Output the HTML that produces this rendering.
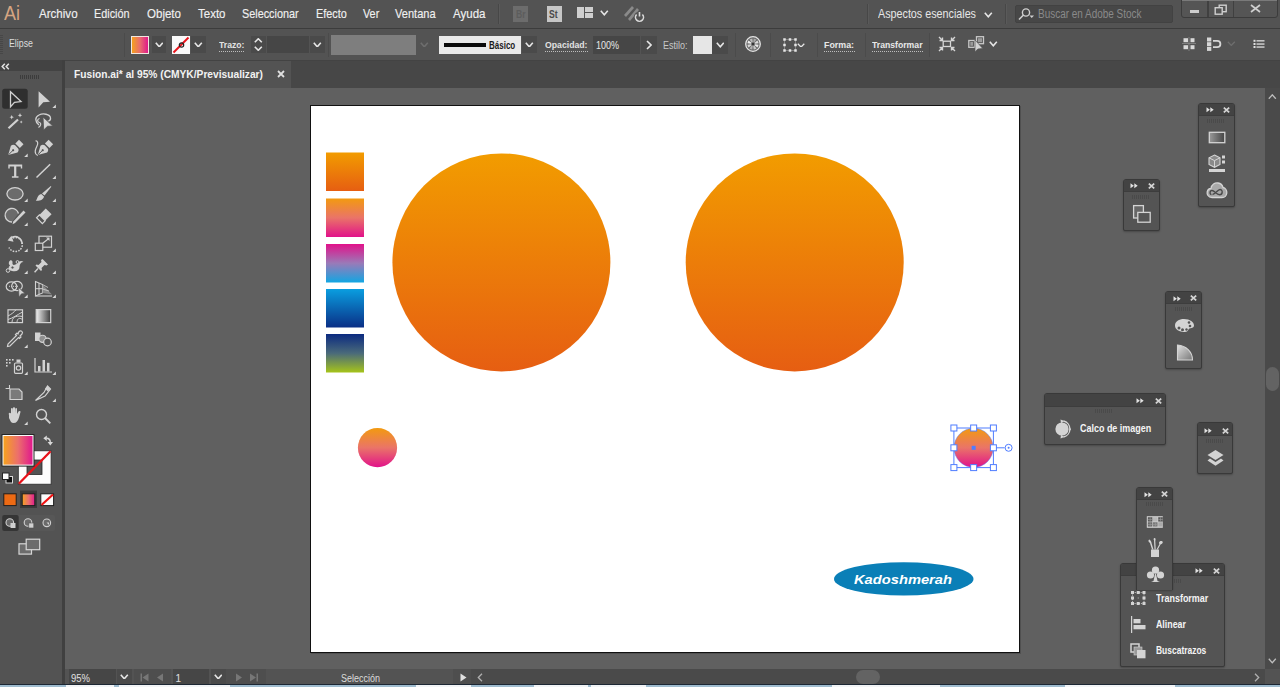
<!DOCTYPE html><html><head><meta charset="utf-8"><style>html,body{margin:0;padding:0;}body{width:1280px;height:687px;overflow:hidden;position:relative;background:#606060;font-family:"Liberation Sans", sans-serif;}.t{position:absolute;white-space:pre;line-height:1;transform-origin:0 0;}</style></head><body>
<div style="position:absolute;left:0px;top:0px;width:1280px;height:28px;background:#535353;"></div>
<div style="position:absolute;left:0px;top:28px;width:1280px;height:1px;background:#3c3c3c;"></div>
<div style="position:absolute;left:0px;top:29px;width:1280px;height:31px;background:#535353;"></div>
<div style="position:absolute;left:0px;top:60px;width:1280px;height:28px;background:#474747;"></div>
<div style="position:absolute;left:0px;top:60px;width:62px;height:627px;background:#535353;"></div>
<div style="position:absolute;left:0px;top:60px;width:62px;height:11px;background:#434343;"></div>
<div style="position:absolute;left:62px;top:60px;width:3px;height:627px;background:#404040;"></div>
<div style="position:absolute;left:65px;top:60px;width:1215px;height:1px;background:#434343;"></div>
<div style="position:absolute;left:65px;top:61px;width:226px;height:27px;background:#535353;"></div>
<div style="position:absolute;left:65px;top:88px;width:1200px;height:581px;background:#606060;"></div>
<div style="position:absolute;left:1265px;top:88px;width:15px;height:581px;background:#4a4a4a;"></div>
<div style="position:absolute;left:65px;top:669px;width:1215px;height:15px;background:#535353;"></div>
<div style="position:absolute;left:471px;top:669px;width:794px;height:15px;background:#4a4a4a;"></div>
<div style="position:absolute;left:0px;top:684px;width:1280px;height:1px;background:#1d2733;"></div>
<div style="position:absolute;left:0px;top:685px;width:1280px;height:2px;background:#9fbccf;"></div>
<div style="position:absolute;left:66px;top:685px;width:48px;height:2px;background:#f2f4f6;"></div>
<div style="position:absolute;left:119px;top:685px;width:111px;height:2px;background:#f2f4f6;"></div>
<div style="position:absolute;left:416px;top:685px;width:55px;height:2px;background:#f2f4f6;"></div>
<div style="position:absolute;left:534px;top:685px;width:54px;height:2px;background:#f2f4f6;"></div>
<div style="position:absolute;left:591px;top:685px;width:55px;height:2px;background:#f2f4f6;"></div>
<div style="position:absolute;left:832px;top:685px;width:108px;height:2px;background:#f2f4f6;"></div>
<div style="position:absolute;left:1065px;top:685px;width:110px;height:2px;background:#f2f4f6;"></div>
<div style="position:absolute;left:310px;top:105px;width:710px;height:548px;background:#ffffff;box-sizing:border-box;border:1px solid #111;box-shadow:1px 1px 0 #505050;"></div>
<svg style="position:absolute;left:0px;top:35px;" width="4" height="19" viewBox="0 0 4 19"><rect x="0" y="0" width="3" height="1" fill="#474747"/><rect x="0" y="2" width="3" height="1" fill="#474747"/><rect x="0" y="4" width="3" height="1" fill="#474747"/><rect x="0" y="6" width="3" height="1" fill="#474747"/><rect x="0" y="8" width="3" height="1" fill="#474747"/><rect x="0" y="10" width="3" height="1" fill="#474747"/><rect x="0" y="12" width="3" height="1" fill="#474747"/><rect x="0" y="14" width="3" height="1" fill="#474747"/><rect x="0" y="16" width="3" height="1" fill="#474747"/><rect x="0" y="18" width="3" height="1" fill="#474747"/></svg>
<div style="position:absolute;left:131px;top:36px;width:18px;height:18px;box-sizing:border-box;border:1px solid #f2e6e0;background:linear-gradient(90deg,#f5a11c,#ea6c6e 50%,#e0198a);"></div>
<div style="position:absolute;left:152px;top:36px;width:14px;height:17px;background:#4a4a4a;"></div>
<svg style="position:absolute;left:154.7px;top:41.7px;" width="8.6" height="5.6" viewBox="0 0 8.6 5.6"><path d="M0.8 0.8 L4.3 4.8 L7.8 0.8" fill="none" stroke="#e6e6e6" stroke-width="1.6"/></svg>
<svg style="position:absolute;left:172px;top:36px;" width="18" height="18" viewBox="0 0 18 18"><rect width="18" height="18" fill="#fafafa"/><line x1="1.5" y1="16.5" x2="16.5" y2="1.5" stroke="#e8141c" stroke-width="2"/><circle cx="9.5" cy="9" r="2.2" fill="none" stroke="#222" stroke-width="1.2"/></svg>
<div style="position:absolute;left:191px;top:36px;width:15px;height:17px;background:#4a4a4a;"></div>
<svg style="position:absolute;left:194.2px;top:41.7px;" width="8.6" height="5.6" viewBox="0 0 8.6 5.6"><path d="M0.8 0.8 L4.3 4.8 L7.8 0.8" fill="none" stroke="#e6e6e6" stroke-width="1.6"/></svg>
<div style="position:absolute;left:219px;top:50.5px;width:26px;height:1px;background:repeating-linear-gradient(90deg,#bdbdbd 0 1px,transparent 1px 2px);"></div>
<div style="position:absolute;left:251px;top:36px;width:15px;height:17px;background:#4a4a4a;"></div>
<svg style="position:absolute;left:254.2px;top:37.95px;" width="8.6" height="5.1" viewBox="0 0 8.6 5.1"><path d="M0.8 4.3 L4.3 0.8 L7.8 4.3" fill="none" stroke="#e6e6e6" stroke-width="1.6"/></svg>
<svg style="position:absolute;left:254.2px;top:45.95px;" width="8.6" height="5.1" viewBox="0 0 8.6 5.1"><path d="M0.8 0.8 L4.3 4.3 L7.8 0.8" fill="none" stroke="#e6e6e6" stroke-width="1.6"/></svg>
<div style="position:absolute;left:267px;top:36px;width:42px;height:17px;background:#464646;"></div>
<div style="position:absolute;left:310px;top:36px;width:15px;height:17px;background:#4a4a4a;"></div>
<svg style="position:absolute;left:313.2px;top:41.7px;" width="8.6" height="5.6" viewBox="0 0 8.6 5.6"><path d="M0.8 0.8 L4.3 4.8 L7.8 0.8" fill="none" stroke="#e6e6e6" stroke-width="1.6"/></svg>
<div style="position:absolute;left:331px;top:35px;width:85px;height:20px;background:#7e7e7e;"></div>
<svg style="position:absolute;left:420.2px;top:41.7px;" width="8.6" height="5.6" viewBox="0 0 8.6 5.6"><path d="M0.8 0.8 L4.3 4.8 L7.8 0.8" fill="none" stroke="#6e6e6e" stroke-width="1.6"/></svg>
<div style="position:absolute;left:439px;top:36px;width:82px;height:18px;background:#e9e9e9;"></div>
<div style="position:absolute;left:444px;top:43px;width:42px;height:3.5px;background:#0a0a0a;"></div>
<div style="position:absolute;left:522px;top:36px;width:15px;height:17px;background:#4a4a4a;"></div>
<svg style="position:absolute;left:525.2px;top:41.7px;" width="8.6" height="5.6" viewBox="0 0 8.6 5.6"><path d="M0.8 0.8 L4.3 4.8 L7.8 0.8" fill="none" stroke="#e6e6e6" stroke-width="1.6"/></svg>
<div style="position:absolute;left:545px;top:50.5px;width:43px;height:1px;background:repeating-linear-gradient(90deg,#bdbdbd 0 1px,transparent 1px 2px);"></div>
<div style="position:absolute;left:593px;top:36px;width:47px;height:18px;background:#464646;"></div>
<div style="position:absolute;left:641px;top:36px;width:16px;height:18px;background:#4a4a4a;"></div>
<svg style="position:absolute;left:646px;top:40px;" width="6" height="10" viewBox="0 0 6 10"><path d="M1 1 L5 5 L1 9" fill="none" stroke="#e6e6e6" stroke-width="1.6"/></svg>
<div style="position:absolute;left:693px;top:36px;width:19px;height:18px;background:#e6e6e6;"></div>
<div style="position:absolute;left:712px;top:36px;width:16px;height:18px;background:#4a4a4a;"></div>
<svg style="position:absolute;left:715.7px;top:42.2px;" width="8.6" height="5.6" viewBox="0 0 8.6 5.6"><path d="M0.8 0.8 L4.3 4.8 L7.8 0.8" fill="none" stroke="#e6e6e6" stroke-width="1.6"/></svg>
<div style="position:absolute;left:124px;top:33px;width:1px;height:24px;background:#4b4b4b;"></div>
<div style="position:absolute;left:328px;top:33px;width:1px;height:24px;background:#4b4b4b;"></div>
<div style="position:absolute;left:735px;top:33px;width:1px;height:24px;background:#4b4b4b;"></div>
<div style="position:absolute;left:770px;top:33px;width:1px;height:24px;background:#4b4b4b;"></div>
<div style="position:absolute;left:817px;top:33px;width:1px;height:24px;background:#4b4b4b;"></div>
<div style="position:absolute;left:865px;top:33px;width:1px;height:24px;background:#4b4b4b;"></div>
<div style="position:absolute;left:929px;top:33px;width:1px;height:24px;background:#4b4b4b;"></div>
<div style="position:absolute;left:824px;top:50.5px;width:31px;height:1px;background:repeating-linear-gradient(90deg,#bdbdbd 0 1px,transparent 1px 2px);"></div>
<div style="position:absolute;left:872px;top:50.5px;width:51px;height:1px;background:repeating-linear-gradient(90deg,#bdbdbd 0 1px,transparent 1px 2px);"></div>
<div style="position:absolute;left:498px;top:4px;width:1px;height:20px;background:#474747;"></div>
<div style="position:absolute;left:499px;top:4px;width:1px;height:20px;background:#5a5a5a;"></div>
<div style="position:absolute;left:513px;top:6px;width:15px;height:16px;background:#6c6c6c;"></div>
<div style="position:absolute;left:547px;top:6px;width:15px;height:16px;background:#c6c6c6;"></div>
<div style="position:absolute;left:577px;top:7px;width:7px;height:11px;background:#cfcfcf;"></div>
<div style="position:absolute;left:585px;top:7px;width:8px;height:5px;background:#cfcfcf;"></div>
<div style="position:absolute;left:585px;top:13px;width:8px;height:5px;background:#cfcfcf;"></div>
<svg style="position:absolute;left:600.2px;top:10.0px;" width="8.6" height="5.6" viewBox="0 0 8.6 5.6"><path d="M0.8 0.8 L4.3 4.8 L7.8 0.8" fill="none" stroke="#e6e6e6" stroke-width="1.6"/></svg>
<svg style="position:absolute;left:622px;top:4px;" width="24" height="20" viewBox="0 0 24 20"><path d="M2 11 L10 2 L12 4 L4 13 Z" fill="#8a8a8a"/><path d="M6 15 L15 4 L17 6 L8 17 Z" fill="#8a8a8a"/><circle cx="17.5" cy="13" r="5.6" fill="#535353"/><path d="M14.6 10.5 A4 4 0 1 0 20.4 10.5" fill="none" stroke="#d8d8d8" stroke-width="1.6"/><line x1="17.5" y1="8" x2="17.5" y2="12.5" stroke="#d8d8d8" stroke-width="1.6"/></svg>
<div style="position:absolute;left:867px;top:4px;width:1px;height:20px;background:#474747;"></div>
<div style="position:absolute;left:868px;top:4px;width:1px;height:20px;background:#5a5a5a;"></div>
<svg style="position:absolute;left:984.2px;top:12.0px;" width="8.6" height="5.6" viewBox="0 0 8.6 5.6"><path d="M0.8 0.8 L4.3 4.8 L7.8 0.8" fill="none" stroke="#e6e6e6" stroke-width="1.6"/></svg>
<div style="position:absolute;left:1005px;top:4px;width:1px;height:20px;background:#474747;"></div>
<div style="position:absolute;left:1006px;top:4px;width:1px;height:20px;background:#5a5a5a;"></div>
<div style="position:absolute;left:1015px;top:5px;width:158px;height:18px;box-sizing:border-box;background:#474747;border:1px solid #424242;border-radius:2px;"></div>
<svg style="position:absolute;left:1017px;top:7px;" width="18" height="14" viewBox="0 0 18 14"><circle cx="9" cy="5.5" r="3.6" fill="none" stroke="#d0d0d0" stroke-width="1.4"/><line x1="6.5" y1="8" x2="2" y2="12.5" stroke="#d0d0d0" stroke-width="1.6"/><path d="M12.5 8.5 L17 8.5 L14.75 11 Z" fill="#d0d0d0"/></svg>
<div style="position:absolute;left:1181px;top:-2px;width:97px;height:20px;box-sizing:border-box;background:#555;border:1px solid #3c3c3c;border-radius:0 0 3px 3px;"></div>
<div style="position:absolute;left:1182px;top:0px;width:95px;height:1px;background:#7a7a7a;"></div>
<div style="position:absolute;left:1207px;top:1px;width:2px;height:16px;background:#404040;"></div>
<div style="position:absolute;left:1233px;top:1px;width:1px;height:16px;background:#404040;"></div>
<div style="position:absolute;left:1190px;top:10px;width:9px;height:3px;background:#cdcdcd;"></div>
<svg style="position:absolute;left:1214px;top:4px;" width="14" height="11" viewBox="0 0 14 11"><rect x="5.2" y="1.2" width="7" height="6.5" fill="none" stroke="#cfcfcf" stroke-width="1.4"/><rect x="1.2" y="3.7" width="7" height="6.5" fill="#555" stroke="#cfcfcf" stroke-width="1.4"/></svg>
<svg style="position:absolute;left:1250px;top:4px;" width="11" height="9" viewBox="0 0 11 9"><path d="M1 1 L10 8 M10 1 L1 8" stroke="#cfcfcf" stroke-width="1.7"/></svg>
<svg style="position:absolute;left:745px;top:36px;" width="16" height="16" viewBox="0 0 16 16"><circle cx="8" cy="8" r="7.3" fill="#6a6a6a" stroke="#e4e4e4" stroke-width="1.3"/><path d="M9.99 8.24 L13.56 8.67 A5.6 5.6 0 0 1 12.41 11.46 L9.57 9.23 Z" fill="#e8e8e8"/><path d="M9.23 9.57 L11.46 12.41 A5.6 5.6 0 0 1 8.67 13.56 L8.24 9.99 Z" fill="#c8c8c8"/><path d="M7.76 9.99 L7.33 13.56 A5.6 5.6 0 0 1 4.54 12.41 L6.77 9.57 Z" fill="#b0b0b0"/><path d="M6.43 9.23 L3.59 11.46 A5.6 5.6 0 0 1 2.44 8.67 L6.01 8.24 Z" fill="#d8d8d8"/><path d="M6.01 7.76 L2.44 7.33 A5.6 5.6 0 0 1 3.59 4.54 L6.43 6.77 Z" fill="#f0f0f0"/><path d="M6.77 6.43 L4.54 3.59 A5.6 5.6 0 0 1 7.33 2.44 L7.76 6.01 Z" fill="#bcbcbc"/><path d="M8.24 6.01 L8.67 2.44 A5.6 5.6 0 0 1 11.46 3.59 L9.23 6.43 Z" fill="#a8a8a8"/><path d="M9.57 6.77 L12.41 4.54 A5.6 5.6 0 0 1 13.56 7.33 L9.99 7.76 Z" fill="#dcdcdc"/><circle cx="8" cy="8" r="1.1" fill="#2a2a2a"/></svg>
<svg style="position:absolute;left:783px;top:38px;" width="14" height="14" viewBox="0 0 14 14"><rect x="1.5" y="1.5" width="11" height="11" fill="none" stroke="#bdbdbd" stroke-width="0.9" stroke-dasharray="1 1"/><rect x="0.25" y="0.25" width="2.5" height="2.5" fill="#e6e6e6"/><rect x="0.25" y="5.75" width="2.5" height="2.5" fill="#e6e6e6"/><rect x="0.25" y="11.25" width="2.5" height="2.5" fill="#e6e6e6"/><rect x="5.75" y="0.25" width="2.5" height="2.5" fill="#e6e6e6"/><rect x="5.75" y="11.25" width="2.5" height="2.5" fill="#e6e6e6"/><rect x="11.25" y="0.25" width="2.5" height="2.5" fill="#e6e6e6"/><rect x="11.25" y="5.75" width="2.5" height="2.5" fill="#e6e6e6"/><rect x="11.25" y="11.25" width="2.5" height="2.5" fill="#e6e6e6"/></svg>
<svg style="position:absolute;left:797.45px;top:42.6px;" width="8.1" height="4.800000000000001" viewBox="0 0 8.1 4.800000000000001"><path d="M0.8 0.8 L4.05 4.0 L7.3 0.8" fill="none" stroke="#e6e6e6" stroke-width="1.3"/></svg>
<svg style="position:absolute;left:938px;top:36px;" width="18" height="16" viewBox="0 0 18 16"><rect x="5.2" y="5.2" width="7.3" height="5.3" fill="none" stroke="#d6d6d6" stroke-width="1.3"/><path d="M1 1 L4.5 4.5 M4.5 1.5 L4.5 4.5 L1.5 4.5" stroke="#d6d6d6" stroke-width="1.4" fill="none"/><path d="M17 1 L13.5 4.5 M13.5 1.5 L13.5 4.5 L16.5 4.5" stroke="#d6d6d6" stroke-width="1.4" fill="none"/><path d="M1 15 L4.5 11.5 M4.5 14.5 L4.5 11.5 L1.5 11.5" stroke="#d6d6d6" stroke-width="1.4" fill="none"/><path d="M17 15 L13.5 11.5 M13.5 14.5 L13.5 11.5 L16.5 11.5" stroke="#d6d6d6" stroke-width="1.4" fill="none"/></svg>
<svg style="position:absolute;left:967px;top:35px;" width="18" height="18" viewBox="0 0 18 18"><rect x="1.8" y="5.5" width="5.8" height="6.8" fill="none" stroke="#c8c8c8" stroke-width="1.3"/><rect x="3.3" y="7" width="2.8" height="3.8" fill="#9a9a9a"/><rect x="9.5" y="1.7" width="7" height="7" fill="none" stroke="#c8c8c8" stroke-width="1.3"/><rect x="11" y="3.2" width="4" height="4" fill="#9a9a9a"/><path d="M8 5 L8 17 L10.8 14 L15.8 13.5 Z" fill="#d2d2d2" stroke="#535353" stroke-width="0.7"/></svg>
<svg style="position:absolute;left:989.2px;top:41.2px;" width="8.6" height="5.6" viewBox="0 0 8.6 5.6"><path d="M0.8 0.8 L4.3 4.8 L7.8 0.8" fill="none" stroke="#e6e6e6" stroke-width="1.6"/></svg>
<svg style="position:absolute;left:1182px;top:37px;" width="14" height="14" viewBox="0 0 14 14"><line x1="7" y1="0" x2="7" y2="14" stroke="#8a8a8a" stroke-width="0.8"/><line x1="0" y1="6.5" x2="14" y2="6.5" stroke="#8a8a8a" stroke-width="0.8"/><rect x="1.5" y="1.2" width="4.5" height="4" fill="#d9d9d9"/><rect x="8.5" y="1.2" width="4" height="4" fill="#d9d9d9"/><rect x="1.5" y="8.2" width="4.5" height="4" fill="#d9d9d9"/><rect x="8.5" y="8.2" width="4" height="4" fill="#d9d9d9"/></svg>
<svg style="position:absolute;left:1206px;top:37px;" width="16" height="15" viewBox="0 0 16 15"><rect x="1" y="0.5" width="4.3" height="4" fill="#d6d6d6"/><rect x="1" y="5.2" width="4.3" height="4" fill="#d6d6d6"/><rect x="1" y="9.9" width="4.3" height="4" fill="#d6d6d6"/><path d="M7 3.8 L11.2 3.8 A3.2 3.2 0 0 1 11.2 10.2 L7 10.2" fill="none" stroke="#d6d6d6" stroke-width="1.8"/></svg>
<svg style="position:absolute;left:1227.2px;top:40.7px;" width="8.6" height="5.2" viewBox="0 0 8.6 5.2"><path d="M0.8 0.8 L4.3 4.4 L7.8 0.8" fill="none" stroke="#6e6e6e" stroke-width="1.3"/></svg>
<svg style="position:absolute;left:1253px;top:39px;" width="12" height="10" viewBox="0 0 12 10"><rect x="0.5" y="0.8" width="2" height="2" fill="#e0e0e0"/><rect x="0.5" y="4" width="2" height="2" fill="#e0e0e0"/><rect x="0.5" y="7" width="2" height="2" fill="#e0e0e0"/><rect x="3.5" y="1.2" width="8" height="1.3" fill="#e0e0e0"/><rect x="3.5" y="4.4" width="8" height="1.3" fill="#e0e0e0"/><rect x="3.5" y="7.4" width="8" height="1.3" fill="#e0e0e0"/></svg>
<svg style="position:absolute;left:277px;top:70px;" width="8" height="8" viewBox="0 0 8 8"><path d="M1 1 L7 7 M7 1 L1 7" stroke="#e0e0e0" stroke-width="1.8"/></svg>
<svg style="position:absolute;left:1px;top:63px;" width="9" height="7" viewBox="0 0 9 7"><path d="M3.8 0.8 L1.2 3.5 L3.8 6.2 M7.8 0.8 L5.2 3.5 L7.8 6.2" fill="none" stroke="#e0e0e0" stroke-width="1.5"/></svg>
<svg style="position:absolute;left:20px;top:75px;" width="19" height="4" viewBox="0 0 19 4"><rect x="0" y="0" width="1" height="4" fill="#3c3c3c"/><rect x="2" y="0" width="1" height="4" fill="#3c3c3c"/><rect x="4" y="0" width="1" height="4" fill="#3c3c3c"/><rect x="6" y="0" width="1" height="4" fill="#3c3c3c"/><rect x="8" y="0" width="1" height="4" fill="#3c3c3c"/><rect x="10" y="0" width="1" height="4" fill="#3c3c3c"/><rect x="12" y="0" width="1" height="4" fill="#3c3c3c"/><rect x="14" y="0" width="1" height="4" fill="#3c3c3c"/><rect x="16" y="0" width="1" height="4" fill="#3c3c3c"/><rect x="18" y="0" width="1" height="4" fill="#3c3c3c"/></svg>
<svg style="position:absolute;left:0px;top:0px;" width="62" height="430" viewBox="0 0 62 430"><rect x="2.2" y="88.7" width="25.5" height="20" rx="2.5" fill="#2f2f2f"/><path d="M10.5 91.8 L21 101.6 L14.5 102.3 L10.5 106.8 Z" fill="none" stroke="#d2d2d2" stroke-width="1.3" stroke-linejoin="miter"/><path d="M38.6 91.3 L50 101.8 L43.3 102.3 L38.6 107.5 Z" fill="#d2d2d2"/><path d="M52.4 108 L55.9 104.5 L55.9 108 Z" fill="#d8d8d8"/><line x1="8.5" y1="128.3" x2="18" y2="119.5" stroke="#d2d2d2" stroke-width="2.2"/><path d="M11.7 115.0 L12.36 116.54 L13.899999999999999 117.2 L12.36 117.86 L11.7 119.4 L11.04 117.86 L9.5 117.2 L11.04 116.54 Z" fill="#d2d2d2"/><path d="M20 113.1 L20.66 114.64 L22.2 115.3 L20.66 115.96 L20 117.5 L19.34 115.96 L17.8 115.3 L19.34 114.64 Z" fill="#d2d2d2"/><path d="M21.2 120.5 L21.65 121.55 L22.7 122 L21.65 122.45 L21.2 123.5 L20.75 122.45 L19.7 122 L20.75 121.55 Z" fill="#d2d2d2"/><path d="M39 125 C35 122 34.5 117 39 115 C43 113 50 114 50.5 118 C51 121 47 122 45 121" fill="none" stroke="#d2d2d2" stroke-width="1.3"/><path d="M39.5 118.5 C37 119 37 122 39.5 122.5 C41.5 123 41 126 38.5 127.5" fill="none" stroke="#d2d2d2" stroke-width="1.2"/><path d="M43 117 L52.8 126 L47.5 126.3 L43.7 130 Z" fill="#d2d2d2" stroke="#535353" stroke-width="0.8"/><g transform="translate(14.9,148.4) rotate(45) translate(-5,-9.5)"><path d="M5 19 L0.3 10.5 C0.3 8.3 1.8 7.2 3 7.2 L7 7.2 C8.2 7.2 9.7 8.3 9.7 10.5 Z" fill="#d2d2d2"/><rect x="1.8" y="0.5" width="6.4" height="5.2" fill="#d2d2d2"/><line x1="5" y1="18.5" x2="5" y2="12.5" stroke="#535353" stroke-width="0.9"/><circle cx="5" cy="12" r="1.1" fill="#535353"/></g><path d="M24.2 157 L27.7 153.5 L27.7 157 Z" fill="#d8d8d8"/><g transform="translate(44.5,148.4) rotate(45) translate(-5,-9.5)"><path d="M5 19 L0.3 10.5 C0.3 8.3 1.8 7.2 3 7.2 L7 7.2 C8.2 7.2 9.7 8.3 9.7 10.5 Z" fill="#d2d2d2"/><rect x="1.8" y="0.5" width="6.4" height="5.2" fill="#d2d2d2"/><line x1="5" y1="18.5" x2="5" y2="12.5" stroke="#535353" stroke-width="0.9"/><circle cx="5" cy="12" r="1.1" fill="#535353"/></g><path d="M37.8 155.5 C33.5 153.5 35.5 149 37 146 C38.5 143 37.5 140.5 35.5 141" fill="none" stroke="#d2d2d2" stroke-width="1.2"/><path d="M8.3 164.6 H22.2 V168.5 H20.8 V166.4 H16.3 V176.3 H18.5 V177.8 H11.9 V176.3 H14.1 V166.4 H9.7 V168.5 H8.3 Z" fill="#d2d2d2"/><path d="M24.2 179 L27.7 175.5 L27.7 179 Z" fill="#d8d8d8"/><line x1="36.5" y1="177.5" x2="50.2" y2="164.2" stroke="#d2d2d2" stroke-width="1.5"/><path d="M52.4 179 L55.9 175.5 L55.9 179 Z" fill="#d8d8d8"/><ellipse cx="15" cy="193.8" rx="8.1" ry="6.2" fill="#6b6b6b" stroke="#d2d2d2" stroke-width="1.3"/><path d="M24.2 202 L27.7 198.5 L27.7 202 Z" fill="#d8d8d8"/><path d="M50.8 186 L51.3 186.8 L44.5 195.5 L42 193.5 Z" fill="#d2d2d2"/><path d="M41.3 194 L44 196.5 C43.5 199.5 40.5 201 35.8 200.8 C37.5 199 37 195.3 41.3 194 Z" fill="#d2d2d2"/><path d="M52.4 202 L55.9 198.5 L55.9 202 Z" fill="#d8d8d8"/><path d="M12 222 A6.8 6.8 0 1 1 18.5 213.5" fill="#6b6b6b" stroke="#d2d2d2" stroke-width="1.3"/><path d="M23.5 210.5 L25.5 212.5 L15 223 L12.5 224.3 L13.3 221.5 Z" fill="#d2d2d2"/><path d="M24.2 226 L27.7 222.5 L27.7 226 Z" fill="#d8d8d8"/><g transform="rotate(-45 44 216)"><rect x="37.5" y="212" width="13" height="8.2" fill="#d2d2d2"/><rect x="37.5" y="212" width="4" height="8.2" fill="#535353" stroke="#d2d2d2" stroke-width="1.2"/></g><path d="M52.4 225 L55.9 221.5 L55.9 225 Z" fill="#d8d8d8"/><path d="M10.5 239.5 A7 7 0 1 1 9 247.5" fill="none" stroke="#d2d2d2" stroke-width="1.5" stroke-dasharray="1.6 1.2"/><path d="M11.5 235.8 L7.5 240.5 L13.5 241.8 Z" fill="#d2d2d2"/><path d="M12 237.3 A7 7 0 0 1 22 244" fill="none" stroke="#d2d2d2" stroke-width="1.5"/><path d="M24.2 252 L27.7 248.5 L27.7 252 Z" fill="#d8d8d8"/><rect x="39" y="236.2" width="12.5" height="11" fill="none" stroke="#d2d2d2" stroke-width="1.2"/><rect x="35.3" y="243.2" width="7.5" height="7.3" fill="#535353" stroke="#d2d2d2" stroke-width="1.2"/><line x1="43" y1="243" x2="48.5" y2="238.8" stroke="#d2d2d2" stroke-width="1.2"/><path d="M49.5 237.5 L49.5 241 L46 237.5 Z" fill="#d2d2d2"/><path d="M52.4 252 L55.9 248.5 L55.9 252 Z" fill="#d8d8d8"/><path d="M9 262 C10 259 13 260 12.5 262.5 C12 265 14 266 17 263.5 C19 261.5 21 260 23.5 262 C21 262 19.5 264 19.5 267 C19.5 270 17 272 12 271 C8 270 8 267 10 265.5 C9 264.5 8.5 263.5 9 262 Z" fill="#d2d2d2"/><circle cx="8" cy="270.5" r="1.8" fill="#535353" stroke="#d2d2d2" stroke-width="1"/><circle cx="12.5" cy="267.5" r="1.6" fill="#535353" stroke="#d2d2d2" stroke-width="1"/><circle cx="17.5" cy="262" r="1.4" fill="#535353" stroke="#d2d2d2" stroke-width="1"/><path d="M24.2 274 L27.7 270.5 L27.7 274 Z" fill="#d8d8d8"/><path d="M42.5 259 L48 264.5 L46.5 265.5 L44.5 265 L41.5 268 L42 270 L41 271 L35.5 265.5 L36.5 264.5 L38.5 265 L41.5 262 L41 260 Z" fill="#d2d2d2"/><line x1="38" y1="268.5" x2="34.6" y2="272.3" stroke="#d2d2d2" stroke-width="1.4"/><path d="M52.4 274 L55.9 270.5 L55.9 274 Z" fill="#d8d8d8"/><ellipse cx="11.5" cy="286.5" rx="5.3" ry="4.6" fill="none" stroke="#d2d2d2" stroke-width="1.2"/><ellipse cx="17" cy="286" rx="5.3" ry="4.6" fill="none" stroke="#d2d2d2" stroke-width="1.2"/><line x1="9" y1="286.3" x2="19" y2="286.3" stroke="#d2d2d2" stroke-width="1" stroke-dasharray="1 1"/><path d="M18.5 287.5 L25 293.5 L21.5 293.8 L19 297 Z" fill="#d2d2d2" stroke="#535353" stroke-width="0.6"/><path d="M24.2 298 L27.7 294.5 L27.7 298 Z" fill="#d8d8d8"/><path d="M35.5 281.5 L42.5 284.5 L42.5 293 L35.5 296 Z" fill="none" stroke="#d2d2d2" stroke-width="1.1"/><path d="M42.5 284.5 L52 294.5 L42.5 293" fill="#8a8a8a"/><line x1="35.5" y1="288.7" x2="42.5" y2="288.7" stroke="#d2d2d2" stroke-width="1"/><line x1="39" y1="283" x2="39" y2="294.5" stroke="#d2d2d2" stroke-width="1"/><line x1="35.5" y1="296" x2="52" y2="296" stroke="#d2d2d2" stroke-width="1.1"/><path d="M42.5 284.5 L48 287.5 M42.5 289 L49 291" stroke="#d2d2d2" stroke-width="0.8"/><path d="M52.4 298 L55.9 294.5 L55.9 298 Z" fill="#d8d8d8"/><rect x="8" y="309.8" width="14.5" height="12.8" fill="none" stroke="#d2d2d2" stroke-width="1.2"/><path d="M8 316 C12 314 14 312 16 309.8 M8 319.5 C13 318 17 315 22.5 312 M12 322.6 C12 318 15 315 22.5 316.5 M17 322.6 C17 319 19 317 22.5 319.5" fill="none" stroke="#d2d2d2" stroke-width="1"/><defs><linearGradient id="gt" x1="0" x2="1"><stop offset="0" stop-color="#f0f0f0"/><stop offset="1" stop-color="#3a3a3a"/></linearGradient></defs><rect x="36.2" y="309.6" width="14.5" height="13" fill="url(#gt)" stroke="#d2d2d2" stroke-width="1.2"/><path d="M19 331.5 C21 329.8 23.5 332 22 334 L20 336 L21 337 L19.5 338.5 L18.5 337.5 L10 346 L7.5 346.5 L8 344 L16.5 335.5 L15.5 334.5 L17 333 L18 334 Z" fill="none" stroke="#d2d2d2" stroke-width="1.2"/><path d="M24.2 348 L27.7 344.5 L27.7 348 Z" fill="#d8d8d8"/><rect x="35" y="332.5" width="5.5" height="8.5" fill="#d2d2d2"/><circle cx="42.5" cy="338.8" r="3.6" fill="#8f8f8f" stroke="#d2d2d2" stroke-width="1.1"/><circle cx="47.5" cy="342" r="3.8" fill="#535353" stroke="#d2d2d2" stroke-width="1.2"/><rect x="6" y="359" width="1.6" height="1.6" fill="#d2d2d2"/><rect x="9" y="359" width="1.6" height="1.6" fill="#d2d2d2"/><rect x="12" y="359" width="1.6" height="1.6" fill="#d2d2d2"/><rect x="6" y="362" width="1.6" height="1.6" fill="#d2d2d2"/><rect x="9" y="362" width="1.6" height="1.6" fill="#d2d2d2"/><rect x="6" y="365" width="1.6" height="1.6" fill="#d2d2d2"/><rect x="14.5" y="363" width="8" height="10.3" rx="1" fill="none" stroke="#d2d2d2" stroke-width="1.2"/><rect x="16.5" y="359.5" width="4" height="3" fill="#d2d2d2"/><circle cx="18.5" cy="368" r="2.2" fill="none" stroke="#d2d2d2" stroke-width="1.2"/><path d="M24.2 375 L27.7 371.5 L27.7 375 Z" fill="#d8d8d8"/><path d="M35 358 V372 H52" fill="none" stroke="#d2d2d2" stroke-width="1.2"/><rect x="38" y="366" width="2.5" height="5.5" fill="#d2d2d2"/><rect x="42.5" y="360" width="2.5" height="11.5" fill="#d2d2d2"/><rect x="47" y="362.8" width="2.5" height="8.7" fill="#d2d2d2"/><path d="M52.4 375 L55.9 371.5 L55.9 375 Z" fill="#d8d8d8"/><path d="M9.5 385 V389 M5.6 388.5 H9.5" stroke="#d2d2d2" stroke-width="1.1"/><path d="M10 389 H19 L22 392 V399.5 H10 Z" fill="#7a7a7a" stroke="#d2d2d2" stroke-width="1.2"/><path d="M47.5 386 L50.5 389 L45 396 L35.5 400.5 L44 392.5 Z" fill="none" stroke="#d2d2d2" stroke-width="1.2"/><path d="M47.5 386 L50.5 389 L47.8 391.5 L45 388.5 Z" fill="#d2d2d2"/><path d="M52.4 402 L55.9 398.5 L55.9 402 Z" fill="#d8d8d8"/><path d="M9 415 C8 413 10 412 11 413.5 L11 408.8 C11 407.8 12.8 407.8 12.8 408.8 L12.8 413 L13 408 C13 407 15 407 15 408 L15 413 L15.3 408.8 C15.3 407.8 17 407.8 17 408.8 L17 414 L18.5 411.5 C19 410.5 20.8 411 20.5 412 L19 417.5 C18 421 16.5 423 13.5 423 C11 423 10.5 421 9 418 Z" fill="#d2d2d2"/><path d="M24.2 425 L27.7 421.5 L27.7 425 Z" fill="#d8d8d8"/><circle cx="41.5" cy="414.5" r="5" fill="none" stroke="#d2d2d2" stroke-width="1.4"/><line x1="45" y1="418" x2="50.3" y2="423.3" stroke="#d2d2d2" stroke-width="1.9"/></svg>
<svg style="position:absolute;left:0px;top:0px;" width="62" height="560" viewBox="0 0 62 560"><defs><linearGradient id="fg" x1="0" x2="1"><stop offset="0" stop-color="#f6a21e"/><stop offset="0.5" stop-color="#ec6f6c"/><stop offset="1" stop-color="#e0198c"/></linearGradient></defs><rect x="18.3" y="450.8" width="32.8" height="33.4" fill="#fdfdfd" stroke="#2a2a2a" stroke-width="0.8"/><rect x="27" y="460" width="15" height="14.5" fill="#535353" stroke="#2a2a2a" stroke-width="0.8"/><line x1="18.8" y1="483.8" x2="50.6" y2="451.3" stroke="#e8121a" stroke-width="2.3"/><rect x="1.5" y="434" width="33" height="32.6" fill="#262626"/><rect x="2.5" y="435" width="31" height="30.6" fill="#fafafa"/><rect x="3.5" y="436" width="29" height="28.6" fill="url(#fg)"/><path d="M46.5 438.3 C49.5 438.3 50.3 439.5 50.3 442.5" fill="none" stroke="#d8d8d8" stroke-width="1.4"/><path d="M43.3 438.3 L46.8 435.6 L46.8 441 Z M50.3 445.6 L47.6 442 L53 442 Z" fill="#d8d8d8"/><rect x="6" y="476.5" width="6.5" height="6.5" fill="#111" stroke="#d8d8d8" stroke-width="1"/><rect x="2.5" y="473" width="6.5" height="6.5" fill="#fafafa" stroke="#222" stroke-width="1"/><rect x="20" y="490.6" width="17" height="17.4" fill="#3a3a3a"/><rect x="3.8" y="493.8" width="12.4" height="11.8" fill="#ec6a14" stroke="#1e1e1e" stroke-width="1"/><rect x="22.2" y="493.8" width="12.6" height="11.8" fill="url(#fg)" stroke="#1e1e1e" stroke-width="1"/><rect x="40.8" y="493.8" width="12.8" height="11.8" fill="#fafafa" stroke="#1e1e1e" stroke-width="1"/><line x1="41.5" y1="505" x2="53" y2="494.5" stroke="#ee1111" stroke-width="2.2"/><rect x="2.2" y="515" width="53" height="16" rx="2" fill="#575757"/><rect x="2.2" y="515" width="16.5" height="16" rx="2" fill="#353535"/><circle cx="9.8" cy="522.5" r="3.8" fill="#6a6a6a" stroke="#d0d0d0" stroke-width="1.1"/><rect x="10.5" y="523" width="5" height="5" fill="#d0d0d0"/><circle cx="28" cy="522.5" r="3.8" fill="#6a6a6a" stroke="#d0d0d0" stroke-width="1.1"/><rect x="28.8" y="523" width="5" height="5" fill="#d0d0d0" stroke="#535353" stroke-width="0.6"/><circle cx="46.8" cy="522.8" r="3.8" fill="#6a6a6a" stroke="#d0d0d0" stroke-width="1.1"/><path d="M46.5 522.5 L49 522.5 L49 525" fill="#d0d0d0"/><rect x="19" y="543.8" width="12.5" height="10.3" fill="#6c6c6c" stroke="#d6d6d6" stroke-width="1.2"/><rect x="26.2" y="539.2" width="13.5" height="10.5" fill="#6c6c6c" stroke="#d6d6d6" stroke-width="1.2"/></svg>
<svg style="position:absolute;left:310px;top:105px;" width="710" height="547" viewBox="0 0 710 547"><defs><linearGradient id="g1" x1="0" y1="0" x2="0" y2="1"><stop offset="0" stop-color="#f29c00"/><stop offset="1" stop-color="#e65e12"/></linearGradient><linearGradient id="g2" x1="0" y1="0" x2="0" y2="1"><stop offset="0" stop-color="#f29a10"/><stop offset="0.5" stop-color="#ea7468"/><stop offset="1" stop-color="#e1128a"/></linearGradient><linearGradient id="g3" x1="0" y1="0" x2="0" y2="1"><stop offset="0" stop-color="#e1128a"/><stop offset="0.5" stop-color="#9a7ab8"/><stop offset="1" stop-color="#12a6e2"/></linearGradient><linearGradient id="g4" x1="0" y1="0" x2="0" y2="1"><stop offset="0" stop-color="#0a9ee0"/><stop offset="1" stop-color="#0a2f86"/></linearGradient><linearGradient id="g5" x1="0" y1="0" x2="0" y2="1"><stop offset="0" stop-color="#0b2a80"/><stop offset="0.5" stop-color="#4a6a7a"/><stop offset="1" stop-color="#a6c41a"/></linearGradient></defs><rect x="16" y="47.5" width="38" height="38.5" fill="url(#g1)"/><rect x="16" y="93.5" width="38" height="38.5" fill="url(#g2)"/><rect x="16" y="139" width="38" height="38.5" fill="url(#g3)"/><rect x="16" y="184" width="38" height="38.5" fill="url(#g4)"/><rect x="16" y="229" width="38" height="38.5" fill="url(#g5)"/><circle cx="191.39999999999998" cy="157.39999999999998" r="109" fill="url(#g1)"/><circle cx="484.70000000000005" cy="157.39999999999998" r="109" fill="url(#g1)"/><circle cx="67.5" cy="342.7" r="19.6" fill="url(#g2)"/><circle cx="663.6" cy="342.8" r="19.6" fill="url(#g2)" stroke="#4f7dff" stroke-opacity="0.55" stroke-width="0.8"/><ellipse cx="593.75" cy="473.9" rx="69.75" ry="16.7" fill="#0a7fb7"/><rect x="643.9" y="323" width="39.5" height="39.60000000000002" fill="none" stroke="#4f7dff" stroke-width="1"/><rect x="640.9" y="320" width="6" height="6" fill="#fff" stroke="#4f7dff" stroke-width="1"/><rect x="640.9" y="339.8" width="6" height="6" fill="#fff" stroke="#4f7dff" stroke-width="1"/><rect x="640.9" y="359.6" width="6" height="6" fill="#fff" stroke="#4f7dff" stroke-width="1"/><rect x="660.65" y="320" width="6" height="6" fill="#fff" stroke="#4f7dff" stroke-width="1"/><rect x="661.65" y="340.8" width="4" height="4" fill="#4f7dff"/><rect x="660.65" y="359.6" width="6" height="6" fill="#fff" stroke="#4f7dff" stroke-width="1"/><rect x="680.4" y="320" width="6" height="6" fill="#fff" stroke="#4f7dff" stroke-width="1"/><rect x="680.4" y="339.8" width="6" height="6" fill="#fff" stroke="#4f7dff" stroke-width="1"/><rect x="680.4" y="359.6" width="6" height="6" fill="#fff" stroke="#4f7dff" stroke-width="1"/><line x1="686.4" y1="342.8" x2="694.6" y2="342.8" stroke="#4f7dff" stroke-width="1"/><circle cx="698.6" cy="342.8" r="3.5" fill="#fff" stroke="#4f7dff" stroke-width="1"/><circle cx="698.6" cy="342.8" r="1" fill="#4f7dff"/></svg>
<div style="position:absolute;left:1119.5px;top:563px;width:105.5px;height:104px;box-sizing:border-box;background:#545454;border:1px solid #393939;border-radius:3px 3px 2px 2px;box-shadow:0 1px 2px rgba(0,0,0,0.25);overflow:hidden"><div style="position:absolute;left:0;top:0;right:0;height:10.5px;background:#434343;border-bottom:1px solid #3d3d3d"></div></div>
<svg style="position:absolute;left:1194.7px;top:567.9px;" width="8" height="6" viewBox="0 0 8 6"><path d="M0.5 0.3 L3.9 2.8 L0.5 5.3 Z M4.3 0.3 L7.7 2.8 L4.3 5.3 Z" fill="#e2e2e2"/></svg>
<svg style="position:absolute;left:1213px;top:567.5px;" width="7" height="6" viewBox="0 0 7 6"><path d="M0.8 0.6 L6.2 5.4 M6.2 0.6 L0.8 5.4" stroke="#d4d4d4" stroke-width="1.7"/></svg>
<svg style="position:absolute;left:1162px;top:578.5px;" width="20" height="4" viewBox="0 0 20 4"><rect x="0" y="0" width="1" height="4" fill="#4a4a4a"/><rect x="2" y="0" width="1" height="4" fill="#4a4a4a"/><rect x="4" y="0" width="1" height="4" fill="#4a4a4a"/><rect x="6" y="0" width="1" height="4" fill="#4a4a4a"/><rect x="8" y="0" width="1" height="4" fill="#4a4a4a"/><rect x="10" y="0" width="1" height="4" fill="#4a4a4a"/><rect x="12" y="0" width="1" height="4" fill="#4a4a4a"/><rect x="14" y="0" width="1" height="4" fill="#4a4a4a"/><rect x="16" y="0" width="1" height="4" fill="#4a4a4a"/><rect x="18" y="0" width="1" height="4" fill="#4a4a4a"/></svg>
<div style="position:absolute;left:1198px;top:103px;width:37px;height:104px;box-sizing:border-box;background:#545454;border:1px solid #393939;border-radius:3px 3px 2px 2px;box-shadow:0 1px 2px rgba(0,0,0,0.25);overflow:hidden"><div style="position:absolute;left:0;top:0;right:0;height:11px;background:#434343;border-bottom:1px solid #3d3d3d"></div></div>
<svg style="position:absolute;left:1205.7px;top:107.0px;" width="8" height="6" viewBox="0 0 8 6"><path d="M0.5 0.3 L3.9 2.8 L0.5 5.3 Z M4.3 0.3 L7.7 2.8 L4.3 5.3 Z" fill="#e2e2e2"/></svg>
<svg style="position:absolute;left:1223px;top:106.6px;" width="7" height="6" viewBox="0 0 7 6"><path d="M0.8 0.6 L6.2 5.4 M6.2 0.6 L0.8 5.4" stroke="#d4d4d4" stroke-width="1.7"/></svg>
<svg style="position:absolute;left:1207px;top:118.8px;" width="19" height="4" viewBox="0 0 19 4"><rect x="0" y="0" width="1" height="4" fill="#4a4a4a"/><rect x="2" y="0" width="1" height="4" fill="#4a4a4a"/><rect x="4" y="0" width="1" height="4" fill="#4a4a4a"/><rect x="6" y="0" width="1" height="4" fill="#4a4a4a"/><rect x="8" y="0" width="1" height="4" fill="#4a4a4a"/><rect x="10" y="0" width="1" height="4" fill="#4a4a4a"/><rect x="12" y="0" width="1" height="4" fill="#4a4a4a"/><rect x="14" y="0" width="1" height="4" fill="#4a4a4a"/><rect x="16" y="0" width="1" height="4" fill="#4a4a4a"/></svg>
<svg style="position:absolute;left:1208px;top:131px;" width="19" height="13" viewBox="0 0 19 13"><defs><linearGradient id="pg" x1="0" x2="1"><stop offset="0" stop-color="#9a9a9a"/><stop offset="1" stop-color="#444"/></linearGradient></defs><rect x="1.3" y="1.3" width="15.5" height="10.4" fill="url(#pg)" stroke="#d4d4d4" stroke-width="1.3"/></svg>
<svg style="position:absolute;left:1207px;top:154px;" width="20" height="19" viewBox="0 0 20 19"><path d="M7.5 1 L13 3.8 L13 10.5 L7.5 13.3 L2 10.5 L2 3.8 Z" fill="#8a8a8a" stroke="#d4d4d4" stroke-width="1.1"/><path d="M2 3.8 L7.5 6.6 L13 3.8 M7.5 6.6 V13.3" fill="none" stroke="#d4d4d4" stroke-width="1"/><rect x="15" y="1.5" width="3" height="3" fill="#d4d4d4"/><rect x="15" y="6.5" width="3" height="3" fill="#d4d4d4"/><rect x="2" y="15" width="16" height="3" fill="#d4d4d4"/></svg>
<svg style="position:absolute;left:1206px;top:181px;" width="22" height="19" viewBox="0 0 22 19"><path d="M6 16.5 C2 16.5 0.8 13 1.2 11 C1.7 8.5 3.5 7.5 5 7.5 C5.5 3.5 9 1.5 12 2 C15 2.5 16.5 4.5 17 6.5 C19.5 7 21 9.5 20.8 12 C20.5 14.5 18.5 16.5 16 16.5 Z" fill="#a8a8a8" stroke="#d4d4d4" stroke-width="1.3"/><path d="M5.5 13.5 C3.5 13.5 3.5 9.5 6 9.5 C8.5 9.5 10.5 13.8 13.5 13.8 C17 13.8 17 8.5 14 8.5 C11.5 8.5 9.5 13.5 6.5 13.5" fill="none" stroke="#4a4a4a" stroke-width="1.4"/></svg>
<div style="position:absolute;left:1123px;top:179px;width:37px;height:52px;box-sizing:border-box;background:#545454;border:1px solid #393939;border-radius:3px 3px 2px 2px;box-shadow:0 1px 2px rgba(0,0,0,0.25);overflow:hidden"><div style="position:absolute;left:0;top:0;right:0;height:11px;background:#434343;border-bottom:1px solid #3d3d3d"></div></div>
<svg style="position:absolute;left:1130.3px;top:183.4px;" width="8" height="6" viewBox="0 0 8 6"><path d="M0.5 0.3 L3.9 2.8 L0.5 5.3 Z M4.3 0.3 L7.7 2.8 L4.3 5.3 Z" fill="#e2e2e2"/></svg>
<svg style="position:absolute;left:1148px;top:183px;" width="7" height="6" viewBox="0 0 7 6"><path d="M0.8 0.6 L6.2 5.4 M6.2 0.6 L0.8 5.4" stroke="#d4d4d4" stroke-width="1.7"/></svg>
<svg style="position:absolute;left:1132px;top:195.4px;" width="18" height="4" viewBox="0 0 18 4"><rect x="0" y="0" width="1" height="4" fill="#4a4a4a"/><rect x="2" y="0" width="1" height="4" fill="#4a4a4a"/><rect x="4" y="0" width="1" height="4" fill="#4a4a4a"/><rect x="6" y="0" width="1" height="4" fill="#4a4a4a"/><rect x="8" y="0" width="1" height="4" fill="#4a4a4a"/><rect x="10" y="0" width="1" height="4" fill="#4a4a4a"/><rect x="12" y="0" width="1" height="4" fill="#4a4a4a"/><rect x="14" y="0" width="1" height="4" fill="#4a4a4a"/><rect x="16" y="0" width="1" height="4" fill="#4a4a4a"/></svg>
<svg style="position:absolute;left:1132px;top:204px;" width="20" height="19" viewBox="0 0 20 19"><rect x="1.6" y="1.6" width="9.8" height="12.4" fill="#666" stroke="#d4d4d4" stroke-width="1.3"/><rect x="5.8" y="8.4" width="12.4" height="9.8" fill="#555" stroke="#d4d4d4" stroke-width="1.3"/></svg>
<div style="position:absolute;left:1165px;top:291px;width:37px;height:78px;box-sizing:border-box;background:#545454;border:1px solid #393939;border-radius:3px 3px 2px 2px;box-shadow:0 1px 2px rgba(0,0,0,0.25);overflow:hidden"><div style="position:absolute;left:0;top:0;right:0;height:10.5px;background:#434343;border-bottom:1px solid #3d3d3d"></div></div>
<svg style="position:absolute;left:1173.0px;top:295.79999999999995px;" width="8" height="6" viewBox="0 0 8 6"><path d="M0.5 0.3 L3.9 2.8 L0.5 5.3 Z M4.3 0.3 L7.7 2.8 L4.3 5.3 Z" fill="#e2e2e2"/></svg>
<svg style="position:absolute;left:1190px;top:295.4px;" width="7" height="6" viewBox="0 0 7 6"><path d="M0.8 0.6 L6.2 5.4 M6.2 0.6 L0.8 5.4" stroke="#d4d4d4" stroke-width="1.7"/></svg>
<svg style="position:absolute;left:1175px;top:306.6px;" width="18" height="4" viewBox="0 0 18 4"><rect x="0" y="0" width="1" height="4" fill="#4a4a4a"/><rect x="2" y="0" width="1" height="4" fill="#4a4a4a"/><rect x="4" y="0" width="1" height="4" fill="#4a4a4a"/><rect x="6" y="0" width="1" height="4" fill="#4a4a4a"/><rect x="8" y="0" width="1" height="4" fill="#4a4a4a"/><rect x="10" y="0" width="1" height="4" fill="#4a4a4a"/><rect x="12" y="0" width="1" height="4" fill="#4a4a4a"/><rect x="14" y="0" width="1" height="4" fill="#4a4a4a"/><rect x="16" y="0" width="1" height="4" fill="#4a4a4a"/></svg>
<svg style="position:absolute;left:1174px;top:318px;" width="21" height="15" viewBox="0 0 21 15"><path d="M10 1 C16 1 20 4 20 7.5 C20 10 17 10 15.5 10.5 C14 11 14.5 14 11 14 C5 14 1 11.5 1 7.5 C1 3.5 5 1 10 1 Z" fill="#d4d4d4"/><circle cx="5" cy="10" r="1.5" fill="#535353"/><circle cx="8.5" cy="11.7" r="1.5" fill="#535353"/><circle cx="12.5" cy="11.5" r="1.2" fill="#535353"/><circle cx="16" cy="8" r="1.3" fill="#535353"/><circle cx="15" cy="4.5" r="1.3" fill="#535353"/></svg>
<svg style="position:absolute;left:1176px;top:344px;" width="18" height="17" viewBox="0 0 18 17"><defs><linearGradient id="cg" x1="0" y1="0" x2="1" y2="1"><stop offset="0" stop-color="#e0e0e0"/><stop offset="1" stop-color="#777"/></linearGradient></defs><path d="M1.5 1 L1.5 16 L16.5 16 C16.5 8 10 1.5 1.5 1 Z" fill="url(#cg)" stroke="#d4d4d4" stroke-width="1.1"/></svg>
<div style="position:absolute;left:1044px;top:393px;width:122px;height:52px;box-sizing:border-box;background:#545454;border:1px solid #393939;border-radius:3px 3px 2px 2px;box-shadow:0 1px 2px rgba(0,0,0,0.25);overflow:hidden"><div style="position:absolute;left:0;top:0;right:0;height:11.5px;background:#434343;border-bottom:1px solid #3d3d3d"></div></div>
<svg style="position:absolute;left:1136.4px;top:398.4px;" width="8" height="6" viewBox="0 0 8 6"><path d="M0.5 0.3 L3.9 2.8 L0.5 5.3 Z M4.3 0.3 L7.7 2.8 L4.3 5.3 Z" fill="#e2e2e2"/></svg>
<svg style="position:absolute;left:1154.8px;top:398px;" width="7" height="6" viewBox="0 0 7 6"><path d="M0.8 0.6 L6.2 5.4 M6.2 0.6 L0.8 5.4" stroke="#d4d4d4" stroke-width="1.7"/></svg>
<svg style="position:absolute;left:1095px;top:408.5px;" width="19" height="4" viewBox="0 0 19 4"><rect x="0" y="0" width="1" height="4" fill="#4a4a4a"/><rect x="2" y="0" width="1" height="4" fill="#4a4a4a"/><rect x="4" y="0" width="1" height="4" fill="#4a4a4a"/><rect x="6" y="0" width="1" height="4" fill="#4a4a4a"/><rect x="8" y="0" width="1" height="4" fill="#4a4a4a"/><rect x="10" y="0" width="1" height="4" fill="#4a4a4a"/><rect x="12" y="0" width="1" height="4" fill="#4a4a4a"/><rect x="14" y="0" width="1" height="4" fill="#4a4a4a"/><rect x="16" y="0" width="1" height="4" fill="#4a4a4a"/></svg>
<svg style="position:absolute;left:1053px;top:418px;" width="20" height="22" viewBox="0 0 20 22"><circle cx="9" cy="11" r="6.6" fill="#d4d4d4"/><path d="M10.5 3 A8.2 8.2 0 0 1 10.5 19" fill="none" stroke="#d4d4d4" stroke-width="1.3"/><path d="M7.5 1.5 L11.5 3 L8 5.2 Z" fill="#d4d4d4"/><path d="M7.5 20.5 L11.5 19 L8 16.8 Z" fill="#d4d4d4"/><path d="M16.8 9 L18 11.5 L16.2 13.5 Z" fill="#d4d4d4"/></svg>
<div style="position:absolute;left:1196.5px;top:422px;width:36.5px;height:52px;box-sizing:border-box;background:#545454;border:1px solid #393939;border-radius:3px 3px 2px 2px;box-shadow:0 1px 2px rgba(0,0,0,0.25);overflow:hidden"><div style="position:absolute;left:0;top:0;right:0;height:12px;background:#434343;border-bottom:1px solid #3d3d3d"></div></div>
<svg style="position:absolute;left:1203.7px;top:427.9px;" width="8" height="6" viewBox="0 0 8 6"><path d="M0.5 0.3 L3.9 2.8 L0.5 5.3 Z M4.3 0.3 L7.7 2.8 L4.3 5.3 Z" fill="#e2e2e2"/></svg>
<svg style="position:absolute;left:1221.5px;top:427.5px;" width="7" height="6" viewBox="0 0 7 6"><path d="M0.8 0.6 L6.2 5.4 M6.2 0.6 L0.8 5.4" stroke="#d4d4d4" stroke-width="1.7"/></svg>
<svg style="position:absolute;left:1206px;top:439px;" width="18" height="4" viewBox="0 0 18 4"><rect x="0" y="0" width="1" height="4" fill="#4a4a4a"/><rect x="2" y="0" width="1" height="4" fill="#4a4a4a"/><rect x="4" y="0" width="1" height="4" fill="#4a4a4a"/><rect x="6" y="0" width="1" height="4" fill="#4a4a4a"/><rect x="8" y="0" width="1" height="4" fill="#4a4a4a"/><rect x="10" y="0" width="1" height="4" fill="#4a4a4a"/><rect x="12" y="0" width="1" height="4" fill="#4a4a4a"/><rect x="14" y="0" width="1" height="4" fill="#4a4a4a"/><rect x="16" y="0" width="1" height="4" fill="#4a4a4a"/></svg>
<svg style="position:absolute;left:1206px;top:449px;" width="19" height="18" viewBox="0 0 19 18"><path d="M9.5 1 L17.5 6 L9.5 11 L1.5 6 Z" fill="#d4d4d4"/><path d="M4 9.5 L9.5 13 L15 9.5 L17.5 11.5 L9.5 16.8 L1.5 11.5 Z" fill="#d4d4d4"/></svg>
<div style="position:absolute;left:1136px;top:486.5px;width:37px;height:103.5px;box-sizing:border-box;background:#545454;border:1px solid #393939;border-radius:3px 3px 2px 2px;box-shadow:0 1px 2px rgba(0,0,0,0.25);overflow:hidden"><div style="position:absolute;left:0;top:0;right:0;height:11.0px;background:#434343;border-bottom:1px solid #3d3d3d"></div></div>
<svg style="position:absolute;left:1143.9px;top:491.59999999999997px;" width="8" height="6" viewBox="0 0 8 6"><path d="M0.5 0.3 L3.9 2.8 L0.5 5.3 Z M4.3 0.3 L7.7 2.8 L4.3 5.3 Z" fill="#e2e2e2"/></svg>
<svg style="position:absolute;left:1161px;top:491.2px;" width="7" height="6" viewBox="0 0 7 6"><path d="M0.8 0.6 L6.2 5.4 M6.2 0.6 L0.8 5.4" stroke="#d4d4d4" stroke-width="1.7"/></svg>
<svg style="position:absolute;left:1146px;top:501.8px;" width="18" height="4" viewBox="0 0 18 4"><rect x="0" y="0" width="1" height="4" fill="#4a4a4a"/><rect x="2" y="0" width="1" height="4" fill="#4a4a4a"/><rect x="4" y="0" width="1" height="4" fill="#4a4a4a"/><rect x="6" y="0" width="1" height="4" fill="#4a4a4a"/><rect x="8" y="0" width="1" height="4" fill="#4a4a4a"/><rect x="10" y="0" width="1" height="4" fill="#4a4a4a"/><rect x="12" y="0" width="1" height="4" fill="#4a4a4a"/><rect x="14" y="0" width="1" height="4" fill="#4a4a4a"/><rect x="16" y="0" width="1" height="4" fill="#4a4a4a"/></svg>
<svg style="position:absolute;left:1146px;top:515px;" width="18" height="14" viewBox="0 0 18 14"><rect x="0.8" y="1.2" width="16" height="11.6" fill="#d4d4d4"/><rect x="1.8" y="2.2" width="4.6" height="4.4" fill="#5a5a5a"/><rect x="7.0" y="2.2" width="4.6" height="4.4" fill="#b8b8b8"/><rect x="12.200000000000001" y="2.2" width="4.6" height="4.4" fill="#5a5a5a"/><rect x="1.8" y="7.2" width="4.6" height="4.4" fill="#6a6a6a"/><rect x="7.0" y="7.2" width="4.6" height="4.4" fill="#7a7a7a"/><rect x="12.200000000000001" y="7.2" width="4.6" height="4.4" fill="#aaaaaa"/><rect x="3.8" y="2.2" width="0.6" height="4.4" fill="#9a9a9a"/><rect x="1.8" y="4.2" width="4.6" height="0.6" fill="#9a9a9a"/><rect x="14.200000000000001" y="2.2" width="0.6" height="4.4" fill="#9a9a9a"/><rect x="12.200000000000001" y="4.2" width="4.6" height="0.6" fill="#9a9a9a"/><rect x="3.8" y="7.2" width="0.6" height="4.4" fill="#9a9a9a"/><rect x="1.8" y="9.2" width="4.6" height="0.6" fill="#9a9a9a"/><rect x="9.0" y="7.2" width="0.6" height="4.4" fill="#9a9a9a"/><rect x="7.0" y="9.2" width="4.6" height="0.6" fill="#9a9a9a"/></svg>
<svg style="position:absolute;left:1147px;top:537px;" width="17" height="21" viewBox="0 0 17 21"><rect x="4" y="12.5" width="8" height="7.5" fill="#d4d4d4"/><path d="M5 12.5 L3 6 C1 5 1 3 2.5 2.5 C4 4 4.5 5 4.5 6 L6.5 12.5 Z" fill="#d4d4d4"/><path d="M7.5 12.5 L7 3 C6 2 7 0.5 8 1 C9 2 8.5 3 8.3 4 L8.7 12.5 Z" fill="#d4d4d4"/><path d="M9.5 12.5 L12.5 7 C11 6 13 3 15.5 4.5 C16.5 5.5 15 7 13.5 7.5 L10.8 12.5 Z" fill="#d4d4d4"/></svg>
<svg style="position:absolute;left:1146px;top:566px;" width="19" height="17" viewBox="0 0 19 17"><circle cx="9.5" cy="4.2" r="3.6" fill="#d4d4d4"/><circle cx="4.5" cy="9" r="3.6" fill="#d4d4d4"/><circle cx="14.5" cy="9" r="3.6" fill="#d4d4d4"/><path d="M9 8 L10 8 L11.5 15 L14 16 L5 16 L7.5 15 Z" fill="#d4d4d4"/></svg>
<div style="position:absolute;left:1136px;top:583px;width:37px;height:7px;background:#545454;border-left:1px solid #393939;border-right:1px solid #393939;box-sizing:border-box;"></div>
<svg style="position:absolute;left:1130px;top:590px;" width="17" height="16" viewBox="0 0 17 16"><rect x="2.5" y="2.5" width="11.5" height="11" fill="none" stroke="#bbb" stroke-width="1" stroke-dasharray="1.2 1"/><rect x="1.0" y="1.0" width="3" height="3" fill="#d4d4d4"/><rect x="1.0" y="6.5" width="3" height="3" fill="#d4d4d4"/><rect x="1.0" y="12.0" width="3" height="3" fill="#d4d4d4"/><rect x="6.75" y="1.0" width="3" height="3" fill="#d4d4d4"/><rect x="6.75" y="12.0" width="3" height="3" fill="#d4d4d4"/><rect x="12.5" y="1.0" width="3" height="3" fill="#d4d4d4"/><rect x="12.5" y="6.5" width="3" height="3" fill="#d4d4d4"/><rect x="12.5" y="12.0" width="3" height="3" fill="#d4d4d4"/><rect x="7.75" y="7.5" width="1" height="1" fill="#bbb"/></svg>
<svg style="position:absolute;left:1130px;top:615px;" width="17" height="19" viewBox="0 0 17 19"><rect x="1" y="1" width="1.2" height="17" fill="#d4d4d4"/><rect x="3.5" y="4" width="7" height="4.3" fill="#d4d4d4"/><rect x="3.5" y="10" width="12" height="4.3" fill="#d4d4d4"/></svg>
<svg style="position:absolute;left:1130px;top:643px;" width="17" height="16" viewBox="0 0 17 16"><rect x="1" y="1" width="8" height="8" fill="none" stroke="#d4d4d4" stroke-width="1.5"/><rect x="4" y="4" width="8" height="8" fill="#999" stroke="#d4d4d4" stroke-width="0.6"/><rect x="7" y="7" width="8.5" height="8.3" fill="#d4d4d4"/></svg>
<div style="position:absolute;left:68.75px;top:669px;width:47px;height:15px;background:#464646;"></div>
<div style="position:absolute;left:117px;top:669px;width:15px;height:15px;background:#4a4a4a;"></div>
<svg style="position:absolute;left:120.2px;top:673.7px;" width="8.6" height="5.6" viewBox="0 0 8.6 5.6"><path d="M0.8 0.8 L4.3 4.8 L7.8 0.8" fill="none" stroke="#e6e6e6" stroke-width="1.6"/></svg>
<div style="position:absolute;left:134px;top:669px;width:37px;height:15px;background:#4e4e4e;"></div>
<svg style="position:absolute;left:139px;top:673px;" width="26" height="9" viewBox="0 0 26 9"><rect x="1.5" y="0.5" width="1.5" height="8" fill="#777"/><path d="M9.5 0.5 L3.5 4.5 L9.5 8.5 Z" fill="#777"/><path d="M24 0.5 L18 4.5 L24 8.5 Z" fill="#777"/></svg>
<div style="position:absolute;left:173px;top:669px;width:36px;height:15px;background:#464646;"></div>
<div style="position:absolute;left:210.5px;top:669px;width:15px;height:15px;background:#4a4a4a;"></div>
<svg style="position:absolute;left:213.7px;top:673.7px;" width="8.6" height="5.6" viewBox="0 0 8.6 5.6"><path d="M0.8 0.8 L4.3 4.8 L7.8 0.8" fill="none" stroke="#e6e6e6" stroke-width="1.6"/></svg>
<div style="position:absolute;left:226px;top:669px;width:40px;height:15px;background:#4e4e4e;"></div>
<svg style="position:absolute;left:235px;top:673px;" width="25" height="9" viewBox="0 0 25 9"><path d="M1 0.5 L7 4.5 L1 8.5 Z" fill="#777"/><path d="M15 0.5 L21 4.5 L15 8.5 Z" fill="#777"/><rect x="21.5" y="0.5" width="1.5" height="8" fill="#777"/></svg>
<div style="position:absolute;left:453px;top:669px;width:18px;height:15px;background:#4e4e4e;"></div>
<svg style="position:absolute;left:460px;top:673px;" width="7" height="9" viewBox="0 0 7 9"><path d="M0.5 0.5 L6.5 4.5 L0.5 8.5 Z" fill="#e0e0e0"/></svg>
<svg style="position:absolute;left:477px;top:673px;" width="6" height="9" viewBox="0 0 6 9"><path d="M5 0.8 L1.3 4.5 L5 8.2" fill="none" stroke="#b0b0b0" stroke-width="1.3"/></svg>
<div style="position:absolute;left:856px;top:670px;width:24px;height:13.5px;background:#636363;border-radius:7px"></div>
<svg style="position:absolute;left:1254px;top:673px;" width="6" height="9" viewBox="0 0 6 9"><path d="M1 0.8 L4.7 4.5 L1 8.2" fill="none" stroke="#b0b0b0" stroke-width="1.3"/></svg>
<svg style="position:absolute;left:1268.2px;top:93.7px;" width="8.6" height="5.6" viewBox="0 0 8.6 5.6"><path d="M0.8 4.8 L4.3 0.8 L7.8 4.8" fill="none" stroke="#bdbdbd" stroke-width="1.3"/></svg>
<svg style="position:absolute;left:1268.2px;top:658.2px;" width="8.6" height="5.6" viewBox="0 0 8.6 5.6"><path d="M0.8 0.8 L4.3 4.8 L7.8 0.8" fill="none" stroke="#bdbdbd" stroke-width="1.3"/></svg>
<div style="position:absolute;left:1266px;top:366.7px;width:13px;height:24px;background:#636363;border-radius:6.5px"></div>
<div class="t" style="left:4px;top:3.07px;font-size:20px;color:#d6a582;transform:scaleX(0.8990);">Ai</div>
<div class="t" style="left:39.4px;top:7.00px;font-size:13px;color:#f0f0f0;transform:scaleX(0.8902);-webkit-text-stroke:0.15px #f0f0f0;">Archivo</div>
<div class="t" style="left:94.4px;top:7.00px;font-size:13px;color:#f0f0f0;transform:scaleX(0.8349);-webkit-text-stroke:0.15px #f0f0f0;">Edición</div>
<div class="t" style="left:146.9px;top:7.00px;font-size:13px;color:#f0f0f0;transform:scaleX(0.8874);-webkit-text-stroke:0.15px #f0f0f0;">Objeto</div>
<div class="t" style="left:197.5px;top:7.00px;font-size:13px;color:#f0f0f0;transform:scaleX(0.8849);-webkit-text-stroke:0.15px #f0f0f0;">Texto</div>
<div class="t" style="left:241.9px;top:7.00px;font-size:13px;color:#f0f0f0;transform:scaleX(0.8331);-webkit-text-stroke:0.15px #f0f0f0;">Seleccionar</div>
<div class="t" style="left:315.9px;top:7.00px;font-size:13px;color:#f0f0f0;transform:scaleX(0.8329);-webkit-text-stroke:0.15px #f0f0f0;">Efecto</div>
<div class="t" style="left:362.5px;top:7.00px;font-size:13px;color:#f0f0f0;transform:scaleX(0.8327);-webkit-text-stroke:0.15px #f0f0f0;">Ver</div>
<div class="t" style="left:395px;top:7.00px;font-size:13px;color:#f0f0f0;transform:scaleX(0.8508);-webkit-text-stroke:0.15px #f0f0f0;">Ventana</div>
<div class="t" style="left:452.5px;top:7.00px;font-size:13px;color:#f0f0f0;transform:scaleX(0.8870);-webkit-text-stroke:0.15px #f0f0f0;">Ayuda</div>
<div class="t" style="left:878px;top:6.50px;font-size:13px;color:#e6e6e6;transform:scaleX(0.8269);">Aspectos esenciales</div>
<div class="t" style="left:1037.5px;top:7.84px;font-size:12px;color:#8a8a8a;transform:scaleX(0.8297);">Buscar en Adobe Stock</div>
<div class="t" style="left:9.4px;top:38.53px;font-size:10px;color:#dcdcdc;transform:scaleX(0.8807);">Elipse</div>
<div class="t" style="left:219px;top:40.37px;font-size:9.6px;color:#e2e2e2;font-weight:bold;transform:scaleX(0.8986);">Trazo:</div>
<div class="t" style="left:545px;top:40.37px;font-size:9.6px;color:#e2e2e2;font-weight:bold;transform:scaleX(0.9058);">Opacidad:</div>
<div class="t" style="left:596px;top:40.83px;font-size:10px;color:#e8e8e8;transform:scaleX(0.8992);">100%</div>
<div class="t" style="left:662.5px;top:40.83px;font-size:10px;color:#c8c8c8;transform:scaleX(0.8996);">Estilo:</div>
<div class="t" style="left:824px;top:40.37px;font-size:9.6px;color:#e8e8e8;font-weight:bold;transform:scaleX(0.9226);">Forma:</div>
<div class="t" style="left:872px;top:40.37px;font-size:9.6px;color:#e8e8e8;font-weight:bold;transform:scaleX(0.9020);">Transformar</div>
<div class="t" style="left:73.75px;top:69.49px;font-size:11px;color:#f2f2f2;font-weight:bold;transform:scaleX(0.9284);">Fusion.ai* al 95% (CMYK/Previsualizar)</div>
<div class="t" style="left:71px;top:673.53px;font-size:10px;color:#e0e0e0;transform:scaleX(0.9493);">95%</div>
<div class="t" style="left:175.6px;top:673.53px;font-size:10px;color:#e0e0e0;">1</div>
<div class="t" style="left:341px;top:673.53px;font-size:10px;color:#dcdcdc;transform:scaleX(0.8995);">Selección</div>
<div class="t" style="left:1079.8px;top:423.54px;font-size:10px;color:#f4f4f4;font-weight:bold;transform:scaleX(0.8959);">Calco de imagen</div>
<div class="t" style="left:1155.7px;top:593.53px;font-size:10px;color:#f4f4f4;font-weight:bold;transform:scaleX(0.8962);">Transformar</div>
<div class="t" style="left:1155.7px;top:619.53px;font-size:10px;color:#f4f4f4;font-weight:bold;transform:scaleX(0.8818);">Alinear</div>
<div class="t" style="left:1155.7px;top:646.03px;font-size:10px;color:#f4f4f4;font-weight:bold;transform:scaleX(0.8458);">Buscatrazos</div>
<div class="t" style="left:854.4px;top:572.50px;font-size:13px;color:#ffffff;font-weight:bold;font-style:italic;transform:scaleX(1.1303);">Kadoshmerah</div>
<div class="t" style="left:489.4px;top:40.83px;font-size:10px;color:#1a1a1a;font-weight:bold;transform:scaleX(0.7989);">Básico</div>
<div class="t" style="left:516px;top:9.29px;font-size:11px;color:#5c5c5c;font-weight:bold;transform:scaleX(0.7847);">Br</div>
<div class="t" style="left:549.4px;top:9.29px;font-size:11px;color:#4a4a4a;font-weight:bold;transform:scaleX(0.7818);">St</div>
</body></html>
